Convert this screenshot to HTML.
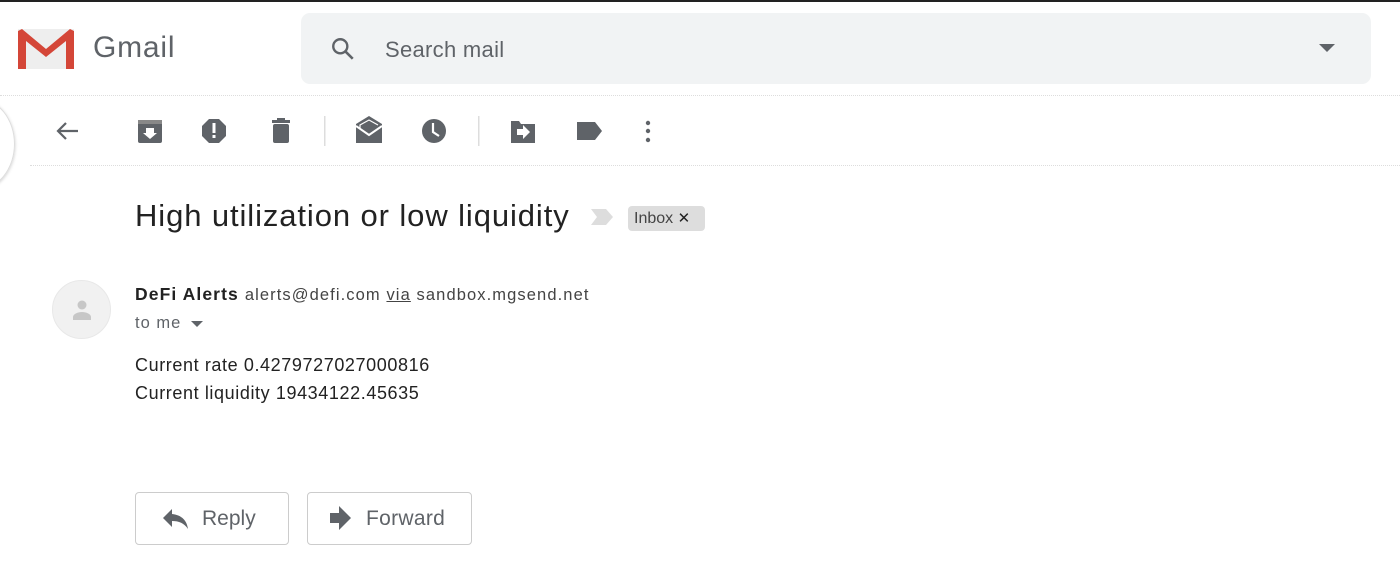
<!DOCTYPE html>
<html><head><meta charset="utf-8"><style>
*{margin:0;padding:0;box-sizing:border-box}
body{width:1400px;height:570px;background:#fff;font-family:"Liberation Sans",Arial,sans-serif;position:relative;overflow:hidden}
.a{position:absolute}
</style></head><body>
<div class="a" style="left:0;top:0;width:1400px;height:2px;background:#222"></div>
<svg class="a" style="left:18px;top:29px" width="56" height="40" viewBox="0 0 56 40">
<rect x="0" y="0" width="56" height="40" fill="#eee"/>
<path d="M4 0 L28 20 L52 0 L56 2 L56 40 L48 40 L48 12 L28 28 L8 12 L8 40 L0 40 L0 2Z" fill="#d44638"/>
</svg>
<div class="a" style="left:93px;top:31px;font-size:30px;color:#5f6368;letter-spacing:0.8px">Gmail</div>
<div class="a" style="left:301px;top:13px;width:1070px;height:71px;background:#f1f3f4;border-radius:9px"></div>
<svg class="a" style="left:330px;top:36px" width="26" height="26" viewBox="0 0 24 24"><circle cx="9.5" cy="9.5" r="6.5" fill="none" stroke="#5f6368" stroke-width="2.2"/><path d="M14 14L21 21" stroke="#5f6368" stroke-width="2.4"/></svg>
<div class="a" style="left:385px;top:37px;font-size:22px;color:#5f6368;letter-spacing:0.3px">Search mail</div>
<svg class="a" style="left:1319px;top:44px" width="16" height="10"><path d="M0 0H16L8 8Z" fill="#5f6368"/></svg>
<div class="a" style="left:0;top:95px;width:1400px;border-top:1px dotted #ddd"></div>
<div class="a" style="left:-60px;top:98px;width:75px;height:92px;border-radius:50%;border:1px solid #ddd;box-shadow:0 1px 3px #ccc"></div>
<svg class="a" style="left:0;top:110px" width="700" height="45" viewBox="0 110 700 45" fill="#5f6368">
<path d="M78 131H58M66 123L58 131L66 139" stroke="#5f6368" stroke-width="2.2" fill="none"/>
<rect x="138" y="120" width="24" height="23" rx="2"/><rect x="138" y="120" width="24" height="4" fill="#888"/><path d="M146 128h8v5h3l-7 6-7-6h3z" fill="#fff"/>
<path d="M209 119h10l7 7v10l-7 7h-10l-7-7v-10z"/><rect x="212.5" y="123" width="3" height="10" fill="#fff"/><rect x="212.5" y="135" width="3" height="3" fill="#fff"/>
<rect x="272" y="120" width="18" height="3"/><rect x="277" y="118" width="8" height="3"/><rect x="273" y="124" width="16" height="19" rx="2"/>
<rect x="324" y="116" width="1.5" height="30" fill="#ddd"/>
<path d="M356 124l13-8 13 8v19h-26z"/><path d="M356 126l13 9 13-9" stroke="#fff" stroke-width="2" fill="none"/><path d="M360 128v-3l9-5 9 5" stroke="#fff" stroke-width="1.2" fill="none"/>
<circle cx="434" cy="131" r="12"/><path d="M433 123v9l6 4" stroke="#fff" stroke-width="2.2" fill="none"/>
<rect x="478" y="116" width="1.5" height="30" fill="#ddd"/>
<path d="M511 121h8l2 3h14v19h-24z"/><path d="M517 129h6v-4l7 7-7 7v-4h-6z" fill="#fff"/>
<path d="M577 122h18l7 9-7 9h-18z"/>
<circle cx="648" cy="123" r="2.2"/><circle cx="648" cy="131" r="2.2"/><circle cx="648" cy="140" r="2.2"/>
</svg>
<div class="a" style="left:30px;top:165px;width:1370px;border-top:1px dotted #ddd"></div>
<div class="a" style="left:135px;top:198px;font-size:31px;color:#222;letter-spacing:0.9px;white-space:nowrap">High utilization or low liquidity</div>
<svg class="a" style="left:590px;top:208px" width="24" height="18"><path d="M1 1h15l7 8-7 8h-15l6-8z" fill="#ddd"/></svg>
<div class="a" style="left:628px;top:206px;width:77px;height:25px;background:#ddd;border-radius:4px;font-size:16px;color:#444;padding:3px 0 0 6px">Inbox <span style="font-size:15px;color:#222">✕</span></div>
<div class="a" style="left:52px;top:280px;width:59px;height:59px;border-radius:50%;background:#f1f1f1;border:1px solid #e8e8e8"></div>
<svg class="a" style="left:67px;top:295px" width="30" height="30"><circle cx="15" cy="10" r="4.5" fill="#c7c7c7"/><path d="M6 25v-3c0-3 5-5 9-5s9 2 9 5v3z" fill="#c7c7c7"/></svg>
<div class="a" style="left:135px;top:284px;font-size:17.5px;color:#222;white-space:nowrap;letter-spacing:1.1px"><b>DeFi Alerts</b> <span style="font-size:16.5px;color:#444">alerts@defi.com <u>via</u> sandbox.mgsend.net</span></div>
<div class="a" style="left:135px;top:314px;font-size:16.5px;color:#5f6368;letter-spacing:1px">to me</div>
<svg class="a" style="left:191px;top:321px" width="12" height="7"><path d="M0 0H12L6 6Z" fill="#5f6368"/></svg>
<div class="a" style="left:135px;top:351px;font-size:18px;color:#222;line-height:28px;letter-spacing:0.6px;white-space:nowrap">Current rate 0.4279727027000816<br>Current liquidity 19434122.45635</div>
<div class="a" style="left:135px;top:492px;width:154px;height:53px;border:1px solid #ccc;border-radius:4px"></div>
<svg class="a" style="left:162px;top:507px" width="28" height="24"><path d="M10 2L1 11l9 9v-6c7 0 12 2 16 8-1-8-6-14-16-15z" fill="#5f6368"/></svg>
<div class="a" style="left:202px;top:507px;font-size:21px;color:#5f6368">Reply</div>
<div class="a" style="left:307px;top:492px;width:165px;height:53px;border:1px solid #ccc;border-radius:4px"></div>
<svg class="a" style="left:328px;top:505px" width="24" height="26"><path d="M2 8h9V1l12 12-12 12v-7H2z" fill="#5f6368"/></svg>
<div class="a" style="left:366px;top:507px;font-size:21px;color:#5f6368;letter-spacing:0.3px">Forward</div>
</body></html>
